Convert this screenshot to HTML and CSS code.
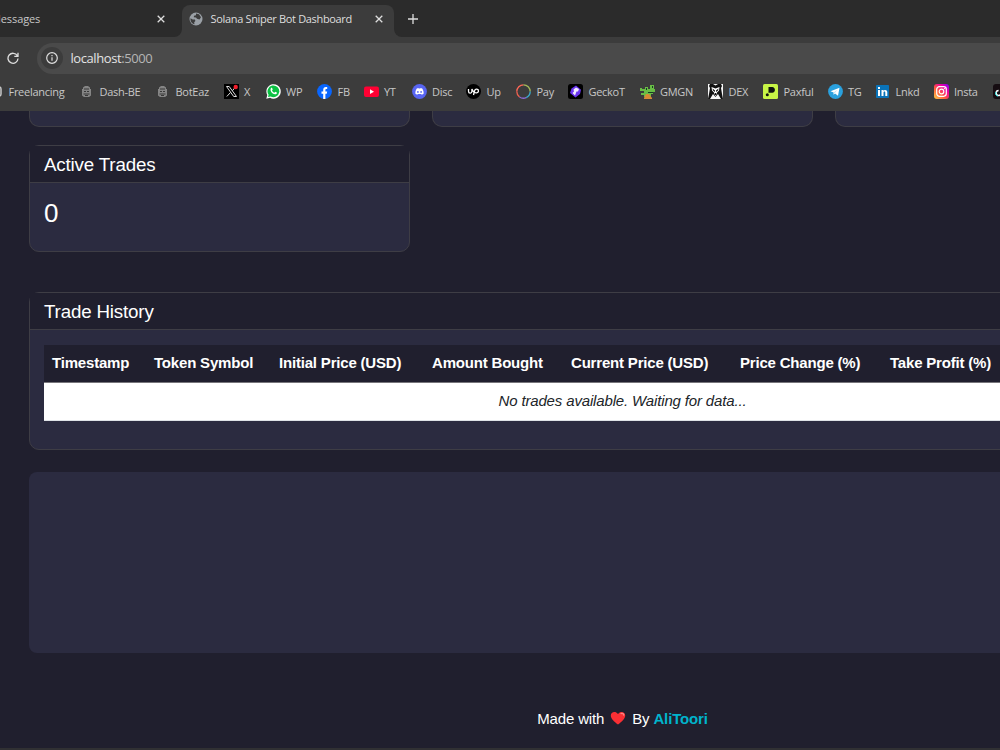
FILE: index.html
```html
<!DOCTYPE html>
<html lang="en">
<head>
    <meta charset="UTF-8">
    <meta name="viewport" content="width=device-width, initial-scale=1.0">
    <title>Solana Sniper Bot Dashboard</title>
    <link rel="stylesheet" href="styles.css">
</head>
<body>
    <header class="browser">
        <div class="tab-strip">
            <div class="tab tab-left">
                <span class="tab-title">Messages</span>
                <svg class="close" viewBox="0 0 8 8"><path d="M.7.7l6.6 6.6M7.3.7L.7 7.3"/></svg>
            </div>
            <div class="tab tab-active">
                <svg class="globe" viewBox="0 0 14 14"><circle cx="7" cy="7" r="6.5" fill="#9aa0a6"/><path d="M1.5 6.2l2.2 1.2 2.2.2.5 1.3-1.2 1.3.3 2C3 11.8 1.2 9.5 1.5 6.2zM7 1.5l3 .7 2 3-1.5 2.3-2.5-.7-1-1.3-2.2-.3.2-1.5 2-.5z" fill="#3c3c3c"/></svg>
                <span class="tab-title">Solana Sniper Bot Dashboard</span>
                <svg class="close" viewBox="0 0 8 8"><path d="M.7.7l6.6 6.6M7.3.7L.7 7.3"/></svg>
            </div>
            <div class="tab-rest">
                <svg class="new-tab" viewBox="0 0 10 10"><path d="M5 0v10M0 5h10"/></svg>
            </div>
        </div>
        <div class="toolbar">
            <svg class="reload" viewBox="0 0 12 12"><path d="M10.3 3.7A5 5 0 1 0 11 6.5M11 .7v3.7H7.3"/></svg>
            <div class="address">
                <span class="site-info"><svg viewBox="0 0 12 12"><circle cx="6" cy="6" r="5.3"/><path d="M6 5.3v3.5M6 3v1.3"/></svg></span>
                <span class="url">localhost<span class="port">:5000</span></span>
            </div>
        </div>
        <nav class="bookmarks">
            <a><svg viewBox="0 0 15 15"><rect x="5" y="3" width="8" height="9" rx="2" fill="none" stroke="#c7c7c7" stroke-width="1.5"/></svg>Freelancing</a>
            <a><svg viewBox="0 0 15 15"><path d="M4 5V3.5L6 2h3l2 1.5V5h1v6.5L10 13H5l-2-1.5V5z" fill="#858585"/><path d="M5 5h5M5 7.5h2M8 7.5h2M4.5 10h6M6 11.5h3" stroke="#393939"/></svg>Dash-BE</a>
            <a><svg viewBox="0 0 15 15"><path d="M4 5V3.5L6 2h3l2 1.5V5h1v6.5L10 13H5l-2-1.5V5z" fill="#858585"/><path d="M5 5h5M5 7.5h2M8 7.5h2M4.5 10h6M6 11.5h3" stroke="#393939"/></svg>BotEaz</a>
            <a><svg viewBox="0 0 15 15"><path d="M0 0h15v15H0z" fill="#000"/><path d="M2.5 2.5h2.7l7.3 10H9.7zM12 2.5L8.4 6.7M6.5 8.5l-3.7 4" fill="none" stroke="#ddd"/><circle cx="11.7" cy="3" r="2.2" fill="#f3202d"/></svg>X</a>
            <a><svg viewBox="0 0 15 15"><path d="M.3 14.7l1-3.7A7.2 7.2 0 1 1 4 13.7z" fill="#fff"/><path d="M2 13l.6-2.3A5.9 5.9 0 1 1 4.6 12.5z" fill="#0bc143"/><path d="M4.9 4.2c.8-.9 1.4-.2 1.8 1.3l-.7.9c.5 1.1 1.3 1.8 2.4 2.3l.9-1c1.9.8 2.1 1.1 1.2 2-2.6 2-7.3-2.5-5.6-5.5z" fill="#fff"/></svg>WP</a>
            <a><svg viewBox="0 0 15 15"><circle cx="7.5" cy="7.5" r="7.4" fill="#0866ff"/><path d="M6.2 15V9.7H4.5V7.4h1.7V6c0-2.4 1.4-3.4 4-2.9v2c-1.4-.1-1.8.1-1.8.9v1.4h1.8l-.4 2.3H8.4V15z" fill="#fff"/></svg>FB</a>
            <a><svg viewBox="0 0 15 15"><rect y="2.5" width="15" height="10.5" rx="2" fill="#ff0033"/><path d="M6 5.3l4 2.4-4 2.4z" fill="#fff"/></svg>YT</a>
            <a><svg viewBox="0 0 15 15"><circle cx="7.5" cy="7.5" r="7.4" fill="#5865f2"/><path d="M4.8 4.4l1.5-.5.4.7h1.6l.4-.7 1.5.5c1.1 1.6 1.6 3.3 1.4 5.3L9.8 10.8l-.6-.9H5.8l-.6.9-1.8-1.1c-.2-2 .3-3.7 1.4-5.3z" fill="#fff"/><circle cx="5.9" cy="7.9" r=".9" fill="#5865f2"/><circle cx="9.1" cy="7.9" r=".9" fill="#5865f2"/></svg>Disc</a>
            <a><svg viewBox="0 0 15 15"><circle cx="7.5" cy="7.5" r="7.5" fill="#000"/><path d="M2.5 5v2.2c0 2.5 3.4 2.5 3.4 0V5c1 2 1.6 3 2.6 3.6M7.5 11l1-4c.8-3 4.2-2.2 4 .2-.3 2.2-3 2.2-4.2.6" fill="none" stroke="#fff" stroke-width="1.3"/></svg>Up</a>
            <a><svg viewBox="0 0 15 15" fill="none" stroke-width="1.3"><path d="M.8 7.5A6.7 6.7 0 0 1 7.5.8" stroke="#ff6757"/><path d="M7.5.8a6.7 6.7 0 0 1 6.7 6.7" stroke="#a4b95a"/><path d="M14.2 7.5a6.7 6.7 0 0 1-4 6.1" stroke="#39abd0"/><path d="M10.2 13.6a6.7 6.7 0 0 1-6.7-.7" stroke="#8b6bd5"/><path d="M3.5 12.9A6.7 6.7 0 0 1 .8 7.5" stroke="#f0604f"/></svg>Pay</a>
            <a><svg viewBox="0 0 15 15"><rect width="15" height="15" rx="2.5" fill="#000"/><path d="M8 1.5l5 4.2-1 4.3-4.500 3.500-5.500-4.500 1.500-4.500z" fill="#6b35f0"/><path d="M5.500 5.500L8 3.500l3 1.500-1 2.500H8.500L7 11.500 4.500 9l1.500-1.500z" fill="#f3ecff"/></svg>GeckoT</a>
            <a><svg viewBox="0 0 15 15"><path d="M5 3h3v2h2V1h4v4h1v3h-2v2h-2v3H4v-2H1V9h3V7H0V4h2v1h3z" fill="#68bd45"/><path d="M6 10h3l3 4v1H4v-1z" fill="#d78b35"/><path d="M6 4h1v2H6zM12 2h1v2h-1zM8 8h5v1H8z" fill="#173d24"/></svg>GMGN</a>
            <a><svg viewBox="0 0 15 15"><path d="M0 0h15v15H0z" fill="#f7f7f7"/><path d="M2 0h3l2.500 1.500L10 0h3l1 2-1 2 1 6 1 5h-2l-3-5-2.500 3L5 10l-3 5H0l1-5 1-6-1-2z" fill="#111"/><path d="M3.500 3l4 1.500 4-1.500-.5 3.500-2 2-1.500 4-1.500-4-2-2z" fill="#fff"/><path d="M4.500 4.500l2.500 2v1.500L5 6.500zM10.500 4.500L8 6.500v1.500l2-1.500zM7 9h1v2H7z" fill="#111"/></svg>DEX</a>
            <a><svg viewBox="0 0 15 15"><rect width="15" height="15" rx="1.5" fill="#c7f546"/><path d="M5.500 3h3.800c3.300 0 3.600 5.600 0 5.800H5.500z" fill="#101510"/><circle cx="4.300" cy="10.800" r="1.500" fill="#101510"/></svg>Paxful</a>
            <a><svg viewBox="0 0 15 15"><circle cx="7.5" cy="7.5" r="7.4" fill="#2aa1de"/><path d="M2.500 7.300l9-3.600-1.500 8-3-2.200-1.500 1.300.1-2.300z" fill="#fff"/><path d="M5.600 8.500L9.500 5.700 6.800 9z" fill="#b9def2"/></svg>TG</a>
            <a><svg viewBox="0 0 15 15"><rect x="1" y="1" width="13" height="13" rx=".8" fill="#0a73b8"/><path d="M3 6h2v6H3zM3 3h2v2H3zM6.5 6h1.900v.8c1.200-1.500 3.900-1 3.900 1.300V12h-2V8.700c0-1.600-1.800-1.500-1.800.1V12h-2z" fill="#fff"/></svg>Lnkd</a>
            <a><svg viewBox="0 0 15 15"><defs><linearGradient id="insta" x1="0" y1="1" x2="1" y2="0"><stop offset="0" stop-color="#ffd348"/><stop offset=".4" stop-color="#ff583d"/><stop offset=".7" stop-color="#f000a0"/><stop offset="1" stop-color="#7900ff"/></linearGradient></defs><rect width="15" height="15" rx="3" fill="url(#insta)"/><rect x="2.7" y="2.7" width="9.6" height="9.6" rx="2.7" fill="none" stroke="#fff" stroke-width="1.2"/><circle cx="7.5" cy="7.5" r="2.3" fill="none" stroke="#fff" stroke-width="1.2"/><circle cx="10.4" cy="4.6" r=".6" fill="#fff"/></svg>Insta</a>
            <a><svg viewBox="0 0 15 15"><rect width="15" height="15" rx="3" fill="#160d12"/><path d="M8 3v6a2.4 2.4 0 1 1-2.4-2.4M8 3c.4 2 1.5 2.8 3.5 3" fill="none" stroke="#fff" stroke-width="1.5"/><path d="M3 8c-1 2 0 4 2 4" fill="none" stroke="#25f4ee"/></svg></a>
        </nav>
    </header>

    <main class="dashboard">
        <div class="stats">
            <div class="card card-tail"></div>
            <div class="card card-tail"></div>
            <div class="card card-tail"></div>
            <div class="card card-stat">
                <div class="card-header">Active Trades</div>
                <div class="card-value">0</div>
            </div>
        </div>

        <div class="card card-history">
            <div class="card-header">Trade History</div>
            <div class="card-body">
                <table class="trades">
                    <colgroup>
                        <col class="c-time"><col class="c-token"><col class="c-initial"><col class="c-amount">
                        <col class="c-current"><col class="c-change"><col class="c-profit"><col>
                    </colgroup>
                    <thead>
                        <tr>
                            <th>Timestamp</th>
                            <th>Token Symbol</th>
                            <th>Initial Price (USD)</th>
                            <th>Amount Bought</th>
                            <th>Current Price (USD)</th>
                            <th>Price Change (%)</th>
                            <th>Take Profit (%)</th>
                            <th></th>
                        </tr>
                    </thead>
                    <tbody>
                        <tr><td colspan="8">No trades available. Waiting for data...</td></tr>
                    </tbody>
                </table>
            </div>
        </div>

        <div class="chart"></div>

        <footer class="footer">
            <span>Made with</span>
            <svg class="heart" viewBox="0 0 16 14"><path d="M8 13.5C4 10.5.8 7.6.8 4.5.8.9 5.5-.6 8 3.1 10.5-.6 15.2.9 15.2 4.5c0 3.1-3.2 6-7.200 9z" fill="#f92f34"/><path d="M11 2.6c1.5-.6 2.7.1 2.8 1.5" fill="none" stroke="#ff8582" stroke-width="1.3" stroke-linecap="round"/></svg>
            <span>By <a class="author">AliToori</a></span>
        </footer>
    </main>
    <div class="window-edge"></div>
</body>
</html>
```
FILE: styles.css
```css
* {
    box-sizing: border-box;
}
html {
    overflow: hidden;
}
body {
    margin: 0;
    height: 750px;
    overflow: hidden;
    display: flex;
    flex-direction: column;
    background-color: #201f2e;
    color: #fff;
    font-family: "Liberation Sans", Arial, sans-serif;
    font-size: 15px;
}
svg {
    display: block;
    flex: none;
}

/* Browser window */
.browser {
    flex: none;
    height: 111px;
    background-color: #3c3c3c;
    color: #c7c7c7;
    font-family: "Open Sans", "Noto Sans", sans-serif;
    font-size: 11px;
    overflow: hidden;
}
.tab-strip {
    display: flex;
    height: 37px;
}
.tab {
    display: flex;
    align-items: center;
    height: 37px;
    white-space: nowrap;
}
.tab-left {
    width: 182px;
    padding-right: 17px;
    justify-content: space-between;
    background-color: #2b2b2b;
    border-radius: 0 0 8px 0;
}
.tab-left .tab-title {
    margin-left: -9px;
    letter-spacing: -0.1px;
}
.tab-active {
    width: 212px;
    padding-left: 7px;
    padding-right: 11px;
    background: linear-gradient(#2b2b2b, #2b2b2b) 0 0 / 100% 15px no-repeat;
    position: relative;
    z-index: 0;
}
.tab-active::before {
    content: "";
    position: absolute;
    inset: 5px 0 0;
    z-index: -1;
    border-radius: 8px 8px 0 0;
    background-color: #3c3c3c;
}
.tab-active .tab-title {
    margin-left: 7.5px;
    letter-spacing: -0.33px;
    color: #dedede;
}
.tab-active .close {
    margin-left: auto;
}
.globe {
    width: 14px;
    height: 14px;
}
.tab-rest {
    display: flex;
    align-items: center;
    flex: 1;
    padding-left: 14px;
    background-color: #2b2b2b;
    border-radius: 0 0 0 8px;
}
.close,
.new-tab,
.reload {
    fill: none;
    stroke: #dedede;
    stroke-width: 1.3;
}
.close {
    width: 8px;
    height: 8px;
}
.new-tab {
    width: 10px;
    height: 10px;
}
.toolbar {
    display: flex;
    align-items: center;
    height: 42px;
    padding-left: 7px;
}
.reload {
    width: 12px;
    height: 12px;
}
.address {
    display: flex;
    align-items: center;
    flex: 1;
    height: 31px;
    margin-left: 18px;
    padding-left: 4px;
    background-color: #4a4a4a;
    border-radius: 16px 0 0 16px;
}
.site-info {
    display: grid;
    place-items: center;
    width: 22px;
    height: 22px;
    border-radius: 50%;
    background-color: #3c3c3c;
}
.site-info svg {
    width: 12px;
    height: 12px;
    fill: none;
    stroke: #dedede;
    stroke-width: 1.2;
}
.url {
    margin-left: 7.5px;
    color: #e3e3e3;
    font-size: 13px;
    letter-spacing: -0.42px;
}
.port {
    color: #b5b5b5;
}
.bookmarks {
    display: grid;
    grid-template-columns: 91px 76px 68.5px 42px 51.5px 46.5px 48px 54.5px 50px 52px 71.5px 68.5px 55px 64.5px 47.5px 58.5px 59px 20px;
    width: 1024px;
    height: 26px;
    margin-top: -1px;
    margin-left: -12px;
}
.bookmarks a {
    display: flex;
    align-items: center;
    gap: 5.5px;
    white-space: nowrap;
    letter-spacing: -0.28px;
}
.bookmarks svg {
    width: 15px;
    height: 15px;
}

/* Dashboard */
.dashboard {
    flex: none;
    width: 1245px;
    padding: 0 29px;
}
.stats {
    display: grid;
    grid-template-columns: repeat(3, 381px);
    column-gap: 22px;
    row-gap: 18px;
}
.card {
    border: 1px solid #3e3d45;
    border-radius: 10px;
    background-color: #2b2b40;
}
.card-tail {
    height: 16px;
    border-top: none;
    border-radius: 0 0 10px 10px;
}
.card-stat {
    height: 107px;
}
.card-header {
    height: 37px;
    padding-left: 14px;
    border-bottom: 1px solid #3e3d45;
    background-color: #201f2e;
    font-size: 18.75px;
    line-height: 37px;
    letter-spacing: -0.17px;
}
.card-value {
    padding: 13px 14px;
    font-size: 26px;
    line-height: 34px;
}
.card-history {
    height: 158px;
    margin-top: 40px;
}
.card-body {
    padding: 15px 14px;
}
.trades {
    width: 1157px;
    table-layout: fixed;
    border-collapse: collapse;
}
.c-time { width: 102px; }
.c-token { width: 125px; }
.c-initial { width: 153px; }
.c-amount { width: 139px; }
.c-current { width: 169px; }
.c-change { width: 150px; }
.c-profit { width: 126px; }
.trades th {
    height: 37px;
    padding: 0 0 2px 8px;
    background-color: #201f2e;
    text-align: left;
    white-space: nowrap;
    letter-spacing: -0.19px;
}
.trades td {
    height: 38px;
    padding: 0 0 1px;
    border-top: 1px solid #77767b;
    border-bottom: 1px solid #dee2e6;
    background-color: #fff;
    color: #212529;
    font-style: italic;
    text-align: center;
    letter-spacing: -0.15px;
}
.chart {
    height: 181px;
    margin-top: 22px;
    border-radius: 8px;
    background-color: #2b2b40;
}
.footer {
    display: flex;
    align-items: center;
    justify-content: center;
    height: 18px;
    margin-top: 56px;
    letter-spacing: -0.15px;
}
.heart {
    width: 16px;
    height: 14px;
    margin: 0 6px;
}
.author {
    color: #00b4cc;
    font-weight: bold;
}
.window-edge {
    flex: none;
    height: 2px;
    margin-top: auto;
    background-color: #303033;
}
```
